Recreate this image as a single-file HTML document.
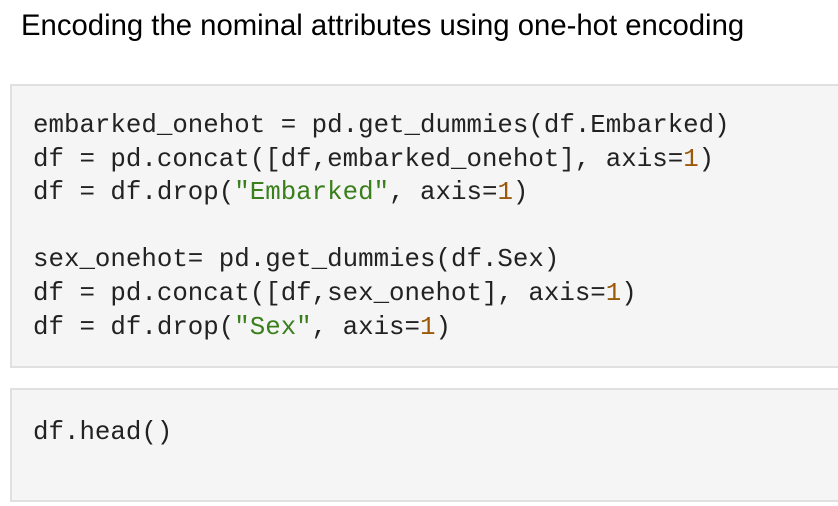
<!DOCTYPE html>
<html><head><style>
html,body{margin:0;padding:0;background:#fff;width:838px;height:506px;overflow:hidden}
h{position:absolute;left:21px;top:9px;font:29.3px "Liberation Sans",sans-serif;color:#000;white-space:nowrap}
.b{position:absolute;left:10px;width:840px;background:#f5f5f5;border:2px solid #e0e0e0;box-sizing:border-box}
pre{margin:0;position:absolute;left:21px;font:25.8px/33.6px "Liberation Mono",monospace;color:#222}
.s{color:#3a7f1c}.n{color:#9a5a0a}
</style></head><body>
<h>Encoding the nominal attributes using one-hot encoding</h>
<div class="b" style="top:84px;height:284px"><pre style="top:23px">embarked_onehot = pd.get_dummies(df.Embarked)
df = pd.concat([df,embarked_onehot], axis=<span class="n">1</span>)
df = df.drop(<span class="s">"Embarked"</span>, axis=<span class="n">1</span>)

sex_onehot= pd.get_dummies(df.Sex)
df = pd.concat([df,sex_onehot], axis=<span class="n">1</span>)
df = df.drop(<span class="s">"Sex"</span>, axis=<span class="n">1</span>)</pre></div>
<div class="b" style="top:388px;height:114px"><pre style="top:26px">df.head()</pre></div>
</body></html>
